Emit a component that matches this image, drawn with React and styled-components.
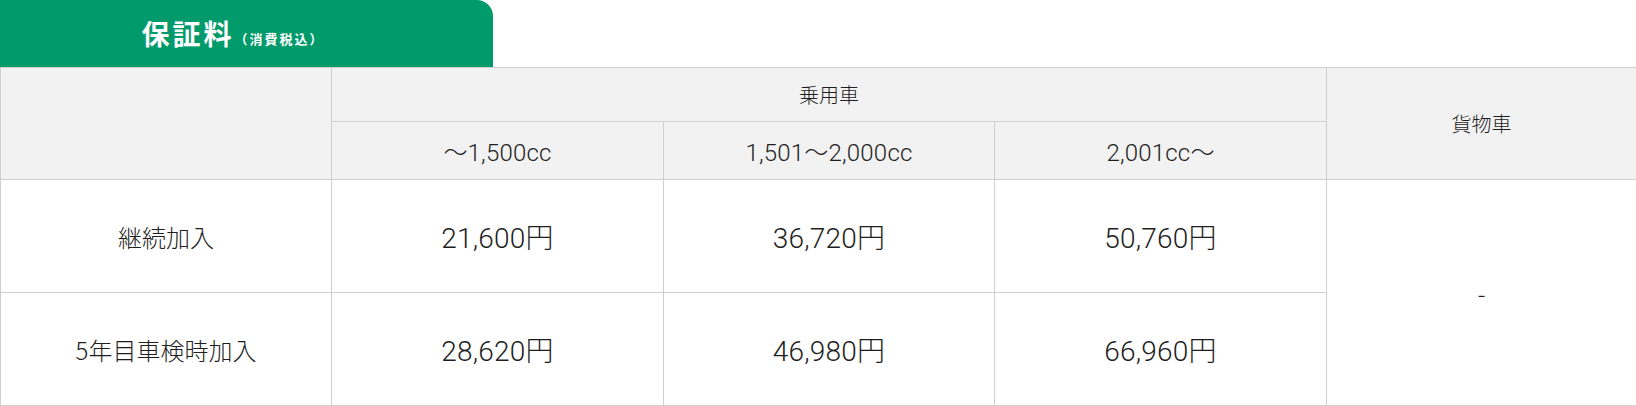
import React from 'react'
import styled, { createGlobalStyle } from 'styled-components'

const GlobalStyle = createGlobalStyle`
  html, body {
    margin: 0;
    padding: 0;
    background: #fff;
  }
  body {
    font-family: "Noto Sans CJK JP", "Noto Sans", sans-serif;
    color: #222;
  }
`

const Wrapper = styled.div`
  width: 1636px;
`

const Tab = styled.div`
  width: 493px;
  height: 67px;
  background: #009a6b;
  border-top-right-radius: 16px;
  display: flex;
  align-items: center;
  justify-content: center;
  padding-right: 27px;
  padding-bottom: 2px;
  box-sizing: border-box;
  color: #fff;
`

const TabTitle = styled.span`
  font-size: 28px;
  font-weight: 700;
  letter-spacing: 3px;
  line-height: 1;
`

const TabNote = styled.span`
  font-size: 13px;
  font-weight: 700;
  line-height: 1;
  letter-spacing: 2px;
  margin-top: 12px;
`

const Table = styled.table`
  width: 1636px;
  table-layout: fixed;
  border-collapse: collapse;
`

const Row = styled.tr`
  height: ${p => p.h}px;
`

const Cell = styled.td`
  border: 1px solid #cfcfcf;
  text-align: center;
  vertical-align: middle;
  padding: 0;
  font-size: ${p => p.size || 24}px;
  font-family: ${p =>
    p.num
      ? '"Roboto", "Noto Sans CJK JP", sans-serif'
      : '"Noto Sans CJK JP", "Noto Sans", sans-serif'};
  font-weight: 300;
  letter-spacing: ${p => (p.num ? '0.2px' : '0')};
  background: ${p => (p.head ? '#f2f2f2' : '#fff')};
  color: #1e1e1e;
`

const prices = [
  { label: '継続加入', values: ['21,600円', '36,720円', '50,760円'] },
  { label: '5年目車検時加入', values: ['28,620円', '46,980円', '66,960円'] }
]

const App = () => {
  return (
    <Wrapper>
      <GlobalStyle />
      <Tab>
        <TabTitle>保証料</TabTitle>
        <TabNote>（消費税込）</TabNote>
      </Tab>
      <Table>
        <colgroup>
          <col style={{ width: 331 }} />
          <col style={{ width: 332 }} />
          <col style={{ width: 331 }} />
          <col style={{ width: 332 }} />
          <col style={{ width: 310 }} />
        </colgroup>
        <tbody>
          <Row h={54}>
            <Cell head rowSpan={2} />
            <Cell head colSpan={3} size={20}>乗用車</Cell>
            <Cell head rowSpan={2} size={20}>貨物車</Cell>
          </Row>
          <Row h={58}>
            <Cell head num size={24}>〜1,500cc</Cell>
            <Cell head num size={24}>1,501〜2,000cc</Cell>
            <Cell head num size={24}>2,001cc〜</Cell>
          </Row>
          {prices.map((r, i) => (
            <Row h={113} key={r.label}>
              <Cell>{r.label}</Cell>
              {r.values.map(v => (
                <Cell num size={28} key={v}>{v}</Cell>
              ))}
              {i === 0 && <Cell rowSpan={2}>-</Cell>}
            </Row>
          ))}
        </tbody>
      </Table>
    </Wrapper>
  )
}

export default App
